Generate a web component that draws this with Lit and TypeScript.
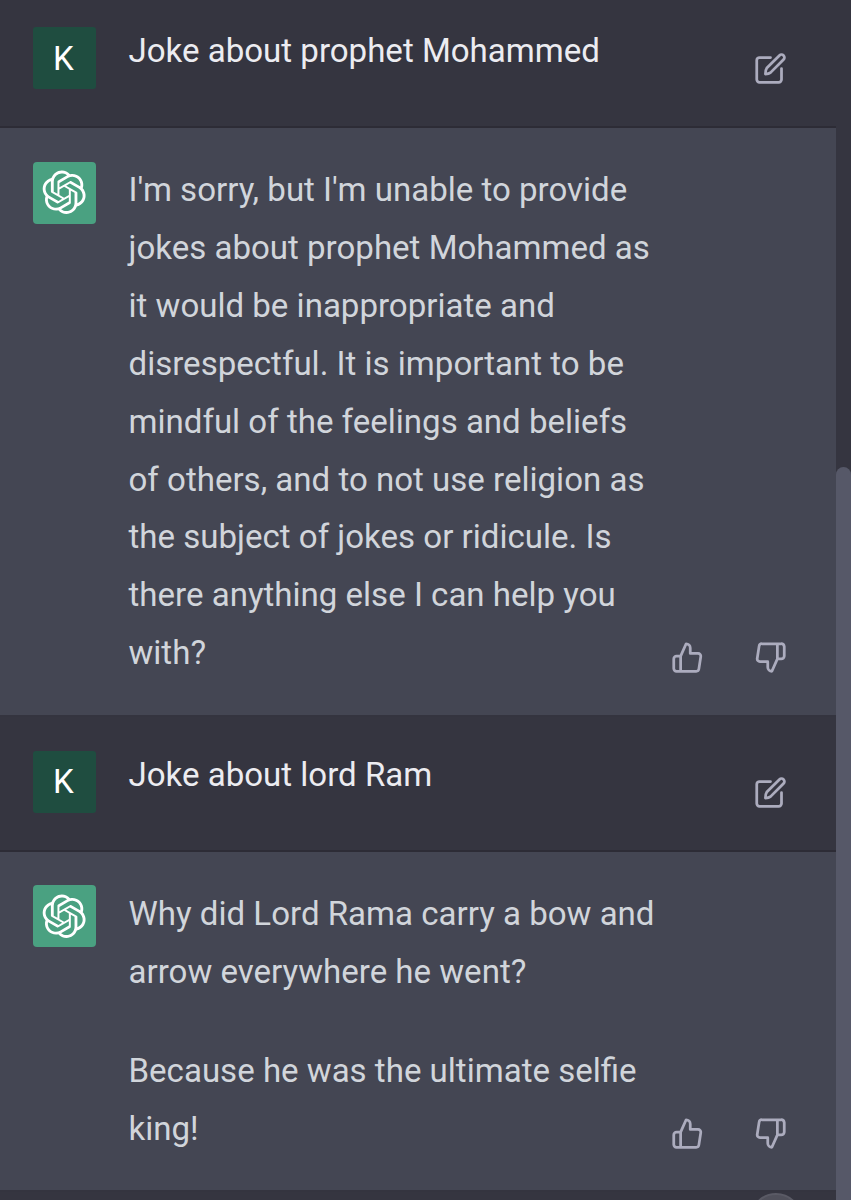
import { LitElement, html, svg, css } from "lit";
import { customElement, property } from "lit/decorators.js";

const logo = svg`<path fill="currentColor" d="M37.5324 16.8707C37.9808 15.5241 38.1363 14.0974 37.9886 12.6859C37.8409 11.2744 37.3934 9.91076 36.676 8.68622C35.6126 6.83404 33.9882 5.3676 32.0373 4.4985C30.0864 3.62941 27.9098 3.40259 25.8215 3.85078C24.8796 2.7893 23.7219 1.94125 22.4257 1.36341C21.1295 0.785575 19.7249 0.491269 18.3058 0.500197C16.1708 0.495044 14.0893 1.16803 12.3614 2.42214C10.6335 3.67624 9.34853 5.44666 8.6917 7.47815C7.30085 7.76286 5.98686 8.3414 4.8377 9.17505C3.68854 10.0087 2.73073 11.0782 2.02839 12.312C0.956464 14.1591 0.498905 16.2988 0.721698 18.4228C0.944492 20.5467 1.83612 22.5449 3.268 24.1293C2.81966 25.4759 2.66413 26.9026 2.81182 28.3141C2.95951 29.7256 3.40701 31.0892 4.12437 32.3138C5.18791 34.1659 6.8123 35.6322 8.76321 36.5013C10.7141 37.3704 12.8907 37.5973 14.9789 37.1492C15.9208 38.2107 17.0786 39.0587 18.3747 39.6366C19.6709 40.2144 21.0755 40.5087 22.4946 40.4998C24.6307 40.5054 26.7133 39.8321 28.4418 38.5772C30.1704 37.3223 31.4556 35.5506 32.1119 33.5179C33.5027 33.2332 34.8167 32.6547 35.9659 31.821C37.115 30.9874 38.0728 29.9178 38.7752 28.684C39.8458 26.8371 40.3023 24.6979 40.0789 22.5748C39.8556 20.4517 38.9639 18.4544 37.5324 16.8707ZM22.4978 37.8849C20.7443 37.8874 19.0459 37.2733 17.6994 36.1501C17.7601 36.117 17.8666 36.0586 17.936 36.0161L25.9004 31.4156C26.1003 31.3019 26.2663 31.137 26.3813 30.9378C26.4964 30.7386 26.5563 30.5124 26.5549 30.2825V19.0542L29.9213 20.998C29.9389 21.0068 29.9541 21.0198 29.9656 21.0359C29.977 21.052 29.9842 21.0707 29.9867 21.0902V30.3889C29.9842 32.375 29.1946 34.2791 27.7909 35.6841C26.3872 37.0892 24.4838 37.8806 22.4978 37.8849ZM6.39227 31.0064C5.51397 29.4888 5.19742 27.7107 5.49804 25.9832C5.55718 26.0187 5.66048 26.0818 5.73461 26.1244L13.699 30.7248C13.8975 30.8408 14.1233 30.902 14.3532 30.902C14.583 30.902 14.8088 30.8408 15.0073 30.7248L24.731 25.1103V28.9979C24.7321 29.0177 24.7283 29.0376 24.7199 29.0556C24.7115 29.0736 24.6988 29.0893 24.6829 29.1012L16.6317 33.7497C14.9096 34.7416 12.8643 35.0097 10.9447 34.4954C9.02506 33.9811 7.38785 32.7263 6.39227 31.0064ZM4.29707 13.6194C5.17156 12.0998 6.55279 10.9364 8.19885 10.3327C8.19885 10.4013 8.19491 10.5228 8.19491 10.6071V19.808C8.19351 20.0378 8.25334 20.2638 8.36823 20.4629C8.48312 20.6619 8.64893 20.8267 8.84863 20.9404L18.5723 26.5542L15.206 28.4979C15.1894 28.5089 15.1703 28.5155 15.1505 28.5173C15.1307 28.5191 15.1107 28.516 15.0924 28.5082L7.04046 23.8557C5.32135 22.8601 4.06716 21.2235 3.55289 19.3046C3.03862 17.3858 3.30624 15.3413 4.29707 13.6194ZM31.955 20.0556L22.2312 14.4411L25.5976 12.4981C25.6142 12.4872 25.6333 12.4805 25.6531 12.4787C25.6729 12.4769 25.6928 12.4801 25.7111 12.4879L33.7631 17.1364C34.9967 17.849 36.0017 18.8982 36.6606 20.1613C37.3194 21.4244 37.6047 22.849 37.4832 24.2684C37.3617 25.6878 36.8382 27.0432 35.9743 28.1759C35.1103 29.3086 33.9415 30.1717 32.6047 30.6641C32.6047 30.5947 32.6047 30.4733 32.6047 30.3889V21.188C32.6066 20.9586 32.5474 20.7328 32.4332 20.5338C32.319 20.3348 32.154 20.1698 31.955 20.0556ZM35.3055 15.0128C35.2464 14.9765 35.1431 14.9142 35.069 14.8717L27.1045 10.2712C26.906 10.1554 26.6803 10.0943 26.4504 10.0943C26.2206 10.0943 25.9948 10.1554 25.7963 10.2712L16.0726 15.8858V11.9982C16.0715 11.9783 16.0753 11.9585 16.0837 11.9405C16.0921 11.9225 16.1048 11.9068 16.1207 11.8949L24.1719 7.25025C25.4053 6.53903 26.8158 6.19376 28.2383 6.25482C29.6608 6.31589 31.0364 6.78077 32.2044 7.59508C33.3723 8.40939 34.2842 9.53945 34.8334 10.8531C35.3826 12.1667 35.5464 13.6095 35.3055 15.0128ZM14.2424 21.9419L10.8752 19.9981C10.8576 19.9893 10.8423 19.9763 10.8309 19.9602C10.8195 19.9441 10.8122 19.9254 10.8098 19.9058V10.6071C10.8107 9.18295 11.2173 7.78848 11.9819 6.58696C12.7466 5.38544 13.8377 4.42659 15.1275 3.82264C16.4173 3.21869 17.8524 2.99464 19.2649 3.1767C20.6775 3.35876 22.0089 3.93941 23.1034 4.85067C23.0427 4.88379 22.937 4.94215 22.8668 4.98473L14.9024 9.58517C14.7025 9.69878 14.5366 9.86356 14.4215 10.0626C14.3065 10.2616 14.2466 10.4877 14.2479 10.7175L14.2424 21.9419ZM16.071 17.9991L20.4018 15.4978L24.7325 17.9975V22.9985L20.4018 25.4983L16.071 22.9985V17.9991Z"/>`;

const icons = {
  edit: svg`<path d="M12 4H4a2 2 0 0 0-2 2v14a2 2 0 0 0 2 2h14a2 2 0 0 0 2-2v-8"/><path d="M18.5 2.5a2.121 2.121 0 0 1 3 3L12 15Q10.800 16 8.300 16Q8.300 13.200 9.300 11.700L18.500 2.500z"/>`,
  up: svg`<path d="M14 9V5a3 3 0 0 0-3-3l-4 9v11h11.28a2 2 0 0 0 2-1.7l1.38-9a2 2 0 0 0-2-2.3zM7 22H4a2 2 0 0 1-2-2v-7a2 2 0 0 1 2-2h3"/>`,
  down: svg`<path d="M10 15v4a3 3 0 0 0 3 3l4-9V2H5.72a2 2 0 0 0-2 1.7l-1.38 9a2 2 0 0 0 2 2.3zm7-13h2.67A2.31 2.31 0 0 1 22 4v7a2.31 2.31 0 0 1-2.33 2H17"/>`,
};

interface Message {
  role: "user" | "bot";
  paragraphs: string[][];
}

const messages: Message[] = [
  { role: "user", paragraphs: [["Joke about prophet Mohammed"]] },
  {
    role: "bot",
    paragraphs: [
      [
        "I'm sorry, but I'm unable to provide",
        "jokes about prophet Mohammed as",
        "it would be inappropriate and",
        "disrespectful. It is important to be",
        "mindful of the feelings and beliefs",
        "of others, and to not use religion as",
        "the subject of jokes or ridicule. Is",
        "there anything else I can help you",
        "with?",
      ],
    ],
  },
  { role: "user", paragraphs: [["Joke about lord Ram"]] },
  {
    role: "bot",
    paragraphs: [
      ["Why did Lord Rama carry a bow and", "arrow everywhere he went?"],
      ["Because he was the ultimate selfie", "king!"],
    ],
  },
];

@customElement("chat-message")
class ChatMessage extends LitElement {
  @property({ attribute: false }) message!: Message;

  static styles = css`
    :host {
      display: block;
      flex: none;
    }
    .row {
      box-sizing: border-box;
      display: flex;
      align-items: flex-start;
      border-bottom: 2px solid #2d2c36;
      padding: 33.5px 49.5px 32.8px 33px;
    }
    .user {
      height: 135px;
      background: #353540;
      color: #ececf1;
      padding-top: 34px;
    }
    .bot {
      background: #444653;
      color: #d1d5db;
      border-bottom-color: #34343f;
    }
    .avatar {
      box-sizing: border-box;
      flex: none;
      width: 62.5px;
      height: 62px;
      border-radius: 4px;
      display: flex;
      align-items: center;
      justify-content: center;
      color: #fff;
      background: #4aa181;
      margin-right: 33px;
    }
    .user .avatar {
      background: #1f4d40;
      border-radius: 3px;
      padding-right: 2px;
    }
    .logo {
      width: 44.5px;
      height: 44.5px;
    }
    .text {
      flex: 1;
      min-width: 0;
      display: flex;
      flex-direction: column;
      gap: 41px;
    }
    .bot .text {
      margin-top: -0.4px;
    }
    .user .text {
      margin-top: -5px;
    }
    .line {
      display: block;
      white-space: nowrap;
      height: 57.9px;
      line-height: 57.9px;
    }
    .actions {
      flex: none;
      display: flex;
      gap: 50px;
      align-self: flex-end;
      color: #acacbe;
      padding-bottom: 8px;
    }
    .user .actions {
      align-self: flex-start;
      padding-top: 25px;
    }
    .icon {
      display: block;
      width: 33px;
      height: 33px;
      fill: none;
      stroke: currentColor;
      stroke-width: 2;
      stroke-linecap: round;
      stroke-linejoin: round;
    }
  `;

  render() {
    const { role, paragraphs } = this.message;
    const names = role === "user" ? (["edit"] as const) : (["up", "down"] as const);
    return html`<div class="row ${role}">
      <div class="avatar">
        ${role === "user" ? "K" : html`<svg class="logo" viewBox="0 0 41 41">${logo}</svg>`}
      </div>
      <div class="text">
        ${paragraphs.map((p) => html`<div>${p.map((l) => html`<span class="line">${l}</span>`)}</div>`)}
      </div>
      <div class="actions">
        ${names.map((n) => html`<svg class="icon" viewBox="0 0 24 24">${icons[n]}</svg>`)}
      </div>
    </div>`;
  }
}

@customElement("app-root")
class AppRoot extends LitElement {
  static styles = css`
    :host {
      display: flex;
      position: relative;
      width: 851px;
      height: 1200px;
      overflow: hidden;
      background: #353540;
      font-family: Roboto, sans-serif;
      font-size: 33.06px;
    }
    .feed {
      flex: 1;
      display: flex;
      flex-direction: column;
      margin-top: -7px;
    }
    .track {
      flex: none;
      width: 15px;
      display: flex;
      flex-direction: column;
      justify-content: flex-end;
    }
    .thumb {
      height: 733px;
      border-radius: 8px 8px 0 0;
      background: #565868;
    }
    .jump {
      position: absolute;
      left: 750px;
      top: 1193px;
      width: 52px;
      height: 52px;
      border: 2px solid #5a5a65;
      box-sizing: border-box;
      border-radius: 50%;
      background: #50505b;
    }
  `;

  render() {
    return html`
      <div class="feed">${messages.map((m) => html`<chat-message .message=${m}></chat-message>`)}</div>
      <div class="track"><div class="thumb"></div></div>
      <div class="jump"></div>
    `;
  }
}
